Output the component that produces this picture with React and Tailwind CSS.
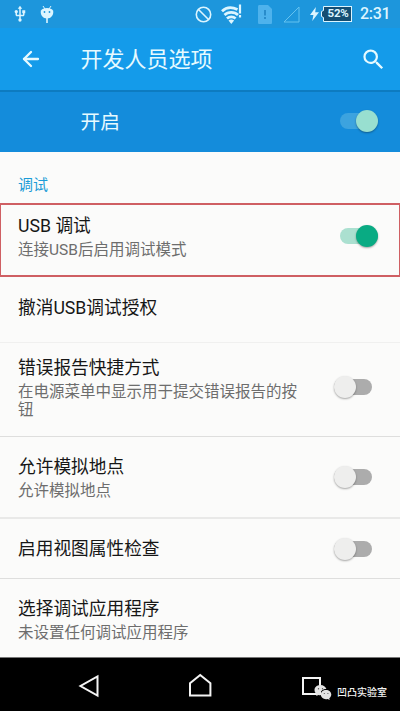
import { ArrowLeft } from 'lucide-react'
import { MdSearch, MdUsb } from 'react-icons/md'

const ROWS = [
  { title: 'USB 调试', sub: '连接USB后启用调试模式', on: true, cls: 'h-[74px] pt-[9px] border-2 border-x border-[#cf5f63]', inset: 'pl-[17px] pr-[21px]', sw: 'mt-[11px]' },
  { title: '撤消USB调试授权', cls: 'h-[66px] pt-[19px] border-b border-[#f0f0ef]' },
  { title: '错误报告快捷方式', sub: '在电源菜单中显示用于提交错误报告的按钮', on: false, cls: 'h-[94px] pt-[13px] border-b border-[#dededd]', sw: 'mt-[20px]' },
  { title: '允许模拟地点', sub: '允许模拟地点', on: false, cls: 'h-[82px] pt-[18px] border-b-2 border-[#e9e9e8]', sw: 'mt-[11px]' },
  { title: '启用视图属性检查', on: false, cls: 'h-[60px] pt-[18px] border-b border-[#dededd]', sw: 'mt-px' },
  { title: '选择调试应用程序', sub: '未设置任何调试应用程序', cls: 'h-[78px] pt-[18px]' },
]

function Switch({ on, light, className = '' }) {
  const track = light ? 'bg-[#3ca3df]' : on ? 'bg-[#abe0d0]' : 'bg-[#acacac]'
  const thumb = light ? 'bg-[#98dfd0]' : on ? 'bg-[#09ab83]' : 'bg-[#eeeeed]'
  return (
    <div className={`flex shrink-0 items-center h-[22px] w-[38px] ${on ? '' : '-translate-x-[6px]'} ${className}`}>
      <div className={`flex h-4 w-full items-center rounded-full ${track} ${on ? 'justify-end' : ''}`}>
        <div className={`size-[22px] shrink-0 rounded-full shadow-[0_1px_2px_rgba(0,0,0,0.35)] ${thumb}`} />
      </div>
    </div>
  )
}

function Row({ title, sub, on, cls, inset = 'pl-[18px] pr-[22px]', sw }) {
  return (
    <div className={`flex items-start justify-between ${inset} ${cls}`}>
      <div className="w-[284px]">
        <div className="text-[17.7px] leading-[24px] text-[#161616]">{title}</div>
        {sub && <div className="text-[15.5px] leading-[18px] mt-[3px] text-[#6d6d6d]">{sub}</div>}
      </div>
      {on !== undefined && <Switch on={on} className={sw} />}
    </div>
  )
}

function StatusBar() {
  return (
    <div className="flex h-7 items-center bg-[#1d96dc] text-[#dcf5ff]">
      <MdUsb className="ml-[11px] size-[18px]" />
      <svg className="ml-[11px] h-[18px] w-[14px]" viewBox="0 0 14 18" fill="currentColor">
        <path d="M3 1l2 3M11 1L9 4" stroke="currentColor" strokeWidth="1" />
        <path d="M.8 5.800C2 4 4 3 7 3s5 1 6.200 2.800C13.700 10.500 11 13.500 7 13.500S.3 10.500.8 5.800z" />
        <path d="M6.200 12h1.600v6H6.200z" />
        <circle cx="4.500" cy="7" r="0.900" fill="#1d96dc" />
        <circle cx="9.500" cy="7" r="0.900" fill="#1d96dc" />
      </svg>
      <svg className="ml-[141px] size-[17px]" viewBox="0 0 17 17" fill="none" stroke="currentColor" strokeWidth="1.600">
        <circle cx="8.500" cy="8.500" r="7.200" />
        <path d="M3.500 3.500l10 10" />
      </svg>
      <svg className="ml-[9px] h-[20px] w-[21px]" viewBox="0 0 21 20" fill="none" stroke="currentColor" strokeWidth="2.700">
        <path d="M1 7.300C5 3.300 11 2.800 16.500 5.500" />
        <path d="M3.500 11c3.500-3.400 10-3.400 13.500 0" />
        <path d="M6 14.500c2.400-2.300 6.200-2.300 8.600 0" />
        <path d="M7.500 16.500L10.300 20l2.800-3.500c-1.700-1.300-3.900-1.300-5.600 0z" fill="currentColor" stroke="none" />
        <path d="M19 .5v9M19 11v2.500" strokeWidth="2.200" />
      </svg>
      <svg className="ml-[16px] h-[19px] w-[14px]" viewBox="0 0 14 19">
        <path d="M1.500 0H10l4 4v13.500c0 1-.5 1.500-1.500 1.500h-11C.5 19 0 18.500 0 17.500v-16C0 .5.5 0 1.500 0z" fill="#4eb2ec" />
        <path d="M7 5v5.500M7 12v2" stroke="#2588c7" strokeWidth="1.800" />
      </svg>
      <svg className="ml-[11px] h-[17px] w-[17px]" viewBox="0 0 17 17" fill="none" stroke="#65c2ef">
        <path d="M16 1v15H1z" />
      </svg>
      <svg className="ml-[10px] h-[14px] w-[9px]" viewBox="0 0 10 15" preserveAspectRatio="none" fill="currentColor">
        <path d="M6.500 0L0 8.500h3.800L2.500 15 10 5.500H5.800z" />
      </svg>
      <svg className="ml-[2px] h-4 w-[4px]" viewBox="0 0 4 16">
        <path d="M4 .5H2.500v4L.5 5.500v5l2 1v4H4" fill="#154e73" stroke="#dcf5ff" />
      </svg>
      <div className="flex h-4 w-[27px] items-center justify-center border border-l-0 border-current bg-[#154e73] text-[11.500px] font-bold leading-none tracking-[-0.3px]">52%</div>
      <div className="ml-[8px] text-[16px] font-medium leading-none tracking-[-0.3px]">2:31</div>
    </div>
  )
}

function NavBar() {
  return (
    <div className="relative h-[54px] bg-black border-t border-[#777]">
      <svg className="block h-[53px] w-[400px]" viewBox="0 658 400 53" fill="none" stroke="#f4f4f4" strokeWidth="2">
        <path d="M97.500 676.500v19L80.500 686z" />
        <path d="M190 695.500v-12.300l10.200-8.200 10.200 8.200v12.300z" />
        <path d="M303 678h17v16h-17z" />
      </svg>
      <div className="absolute left-[314px] top-[26px] flex items-center">
        <svg className="h-[17px] w-[18px]" viewBox="0 0 18 17" fill="#e4e4e4">
          <path d="M6.500 1C2.900 1 .5 3.300.5 6c0 1.700.8 3 2.200 4l-.5 2 2.200-1.100c.7.200 1.400.300 2.100.300-.8-3.700 2.200-6.200 5.900-6.100C11.700 2.700 9.400 1 6.500 1z" />
          <path d="M12 6c-3 0-5.200 2-5.200 4.600S9 15.200 12 15.200c.6 0 1.200-.1 1.700-.3l2 1-.4-1.700c1.200-.8 2-2.100 2-3.600C17.300 8 15 6 12 6z" />
          <g fill="#555">
            <circle cx="4.500" cy="4.700" r=".7" />
            <circle cx="8.500" cy="4.700" r=".7" />
            <circle cx="10.300" cy="9.500" r=".6" />
            <circle cx="13.900" cy="9.500" r=".6" />
          </g>
        </svg>
        <span className="ml-[5px] whitespace-nowrap text-[10px] leading-[16px] font-medium text-[#f2f2f2]">凹凸实验室</span>
      </div>
    </div>
  )
}

export default function App() {
  return (
    <div className="w-[400px] h-[711px] overflow-hidden bg-[#fbfbfa] font-[Roboto,'Noto_Sans_CJK_SC',sans-serif]">
      <StatusBar />
      <div className="flex h-[62px] items-center bg-[#149bea] text-[#e6faff]">
        <ArrowLeft className="ml-[19px] size-6" strokeWidth={2.3} />
        <h1 className="ml-[37.5px] pt-[2px] text-[22px] leading-[30px]">开发人员选项</h1>
        <MdSearch className="ml-auto mr-[13px] size-[27px]" />
      </div>
      <div className="flex h-[62px] items-center justify-between border-t-2 border-[#0d7bc0] bg-[#148cdb] pl-[80.5px] pr-[22px] text-[#e6faff]">
        <span className="pt-[2px] text-[19.7px] leading-[28px]">开启</span>
        <Switch on light className="-mt-[2px]" />
      </div>
      <div className="h-[51px] pl-[18px] pt-[23px] text-[15px] leading-[20px] text-[#1b9bd7]">调试</div>
      {ROWS.map((row) => <Row key={row.title} {...row} />)}
      <NavBar />
    </div>
  )
}
